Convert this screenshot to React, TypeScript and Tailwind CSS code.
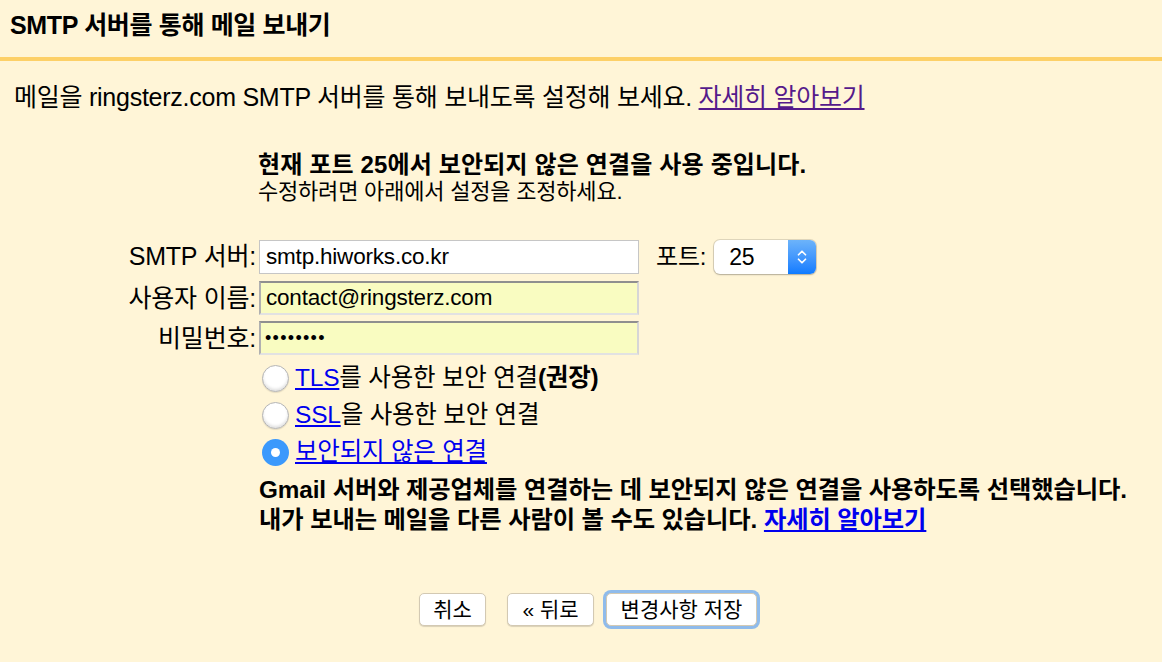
import { ChevronUp, ChevronDown } from "lucide-react";

const font = "font-['Liberation_Sans','Noto_Sans_CJK_KR',sans-serif]";

const Radio = ({ checked }: { checked?: boolean }) =>
  checked ? (
    <span className="w-[27px] h-[27px] rounded-full bg-[#3b99fc] flex items-center justify-center shrink-0">
      <span className="w-[9px] h-[9px] rounded-full bg-white" />
    </span>
  ) : (
    <span className="w-[27px] h-[27px] rounded-full bg-white border border-[#b5b5b5] shadow-[inset_0_-2px_3px_rgba(0,0,0,0.12),0_1px_1px_rgba(0,0,0,0.1)] shrink-0" />
  );

const btn =
  "h-[33px] bg-white rounded-[5px] border border-[#d3c9b3] flex items-center justify-center";

const App = () => {
  return (
    <div className={`w-[1162px] h-[662px] bg-[#fff5d7] text-black ${font} overflow-hidden`}>
      {/* header */}
      <div className="h-[57px] px-[10px] pt-[8px]">
        <p className="font-bold text-[25px] leading-[34px] tracking-[-0.35px]">SMTP 서버를 통해 메일 보내기</p>
      </div>
      <div className="h-[4px] bg-[#fdd067]" />

      <p className="mt-[21px] pl-[14px] text-[25px] leading-[30px] tracking-[-0.25px]">
        메일을 ringsterz.com SMTP 서버를 통해 보내도록 설정해 보세요.{" "}
        <a className="text-[#551a8b] underline">자세히 알아보기</a>
      </p>

      <div className="mt-[39px] pl-[258px]">
        <p className="font-bold text-[24px] leading-[28px] tracking-[0.15px]">현재 포트 25에서 보안되지 않은 연결을 사용 중입니다.</p>
        <p className="text-[22px] leading-[26px] tracking-[-0.2px]">수정하려면 아래에서 설정을 조정하세요.</p>
      </div>

      {/* form */}
      <div className="mt-[34px] grid grid-cols-[259px_auto] gap-y-[6px] text-[24px] tracking-[-0.2px]">
        <label className="text-right pr-[3px] leading-[34px] text-[25px]">SMTP 서버:</label>
        <div className="flex items-center">
          <div className="w-[380px] h-[34px] bg-white border border-[#c6c6c6] px-[6px] flex items-center text-[22.5px]">
            smtp.hiworks.co.kr
          </div>
          <span className="ml-[17px]">포트:</span>
          <div className="ml-[8px] w-[102px] h-[34px] rounded-[6px] bg-white shadow-[0_0_0_1px_rgba(0,0,0,0.12),0_1px_2px_rgba(0,0,0,0.2)] flex overflow-hidden">
            <span className="flex-1 flex items-center pl-[15px] text-[23px]">25</span>
            <span className="w-[28px] bg-gradient-to-b from-[#6cb3fa] to-[#0b7bff] flex flex-col items-center justify-center text-white">
              <ChevronUp size={14} strokeWidth={3} className="-mb-[3px]" />
              <ChevronDown size={14} strokeWidth={3} className="-mt-[3px]" />
            </span>
          </div>
        </div>

        <label className="text-right pr-[3px] leading-[34px] text-[25px]">사용자 이름:</label>
        <div>
          <div className="w-[380px] h-[34px] bg-[#f9fcc1] border-2 border-t-[#8f8f8f] border-l-[#b0b0b0] border-r-[#d6d6d6] border-b-[#e2e2e2] px-[5px] flex items-center text-[22.5px]">
            contact@ringsterz.com
          </div>
        </div>

        <label className="text-right pr-[3px] leading-[34px] text-[25px]">비밀번호:</label>
        <div>
          <div className="w-[380px] h-[34px] bg-[#f9fcc1] border-2 border-t-[#8f8f8f] border-l-[#b0b0b0] border-r-[#d6d6d6] border-b-[#e2e2e2] px-[4px] flex items-center text-[18px] tracking-[1.3px]">
            ••••••••
          </div>
        </div>

        <div />
        <div className="flex flex-col gap-[9px] pt-[3px] pl-[3px] text-[24.5px]">
          <div className="flex items-center gap-[6px] h-[28px]">
            <Radio />
            <span>
              <a className="text-[#0000ee] underline">TLS</a>를 사용한 보안 연결<b>(권장)</b>
            </span>
          </div>
          <div className="flex items-center gap-[6px] h-[28px]">
            <Radio />
            <span>
              <a className="text-[#0000ee] underline">SSL</a>을 사용한 보안 연결
            </span>
          </div>
          <div className="flex items-center gap-[6px] h-[28px]">
            <Radio checked />
            <a className="text-[#0000ee] underline">보안되지 않은 연결</a>
          </div>
        </div>

        <div />
        <div className="pt-[3px] font-bold leading-[30px] text-[24.3px] tracking-[-0.1px]">
          <p>Gmail 서버와 제공업체를 연결하는 데 보안되지 않은 연결을 사용하도록 선택했습니다.</p>
          <p>
            내가 보내는 메일을 다른 사람이 볼 수도 있습니다.{" "}
            <a className="text-[#0000ee] underline">자세히 알아보기</a>
          </p>
        </div>
      </div>

      {/* buttons */}
      <div className="mt-[58px] flex pl-[419px] text-[21px]">
        <button className={`${btn} w-[67px] shadow-[0_1px_1px_rgba(0,0,0,0.15)]`}>취소</button>
        <button className={`${btn} ml-[21px] w-[87px] shadow-[0_1px_1px_rgba(0,0,0,0.15)]`}>« 뒤로</button>
        <button className={`${btn} ml-[12px] w-[151px] shadow-[0_0_0_3px_#8fbbeb]`}>변경사항 저장</button>
      </div>
    </div>
  );
};

export default App;
